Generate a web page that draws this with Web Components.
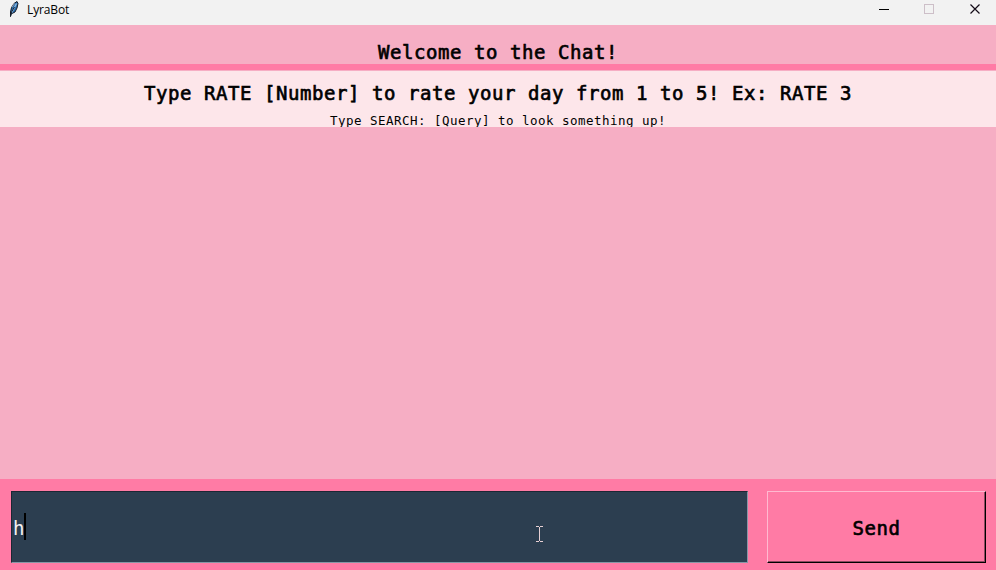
<!DOCTYPE html>
<html lang="en"><head><meta charset="utf-8"><title>LyraBot</title>
<style>html,body{margin:0;height:100%;overflow:hidden}</style></head><body>
<chat-window>
<title-bar slot="title">LyraBot</title-bar>
<chat-heading slot="head">Welcome to the Chat!</chat-heading>
<chat-log slot="log"><span slot="first">Type RATE [Number] to rate your day from 1 to 5! Ex: RATE 3</span><span slot="second">Type SEARCH: [Query] to look something up!</span></chat-log>
<chat-footer slot="foot"><chat-entry>h</chat-entry><chat-button>Send</chat-button></chat-footer>
</chat-window>
<script>
const define = (name, html) => customElements.define(name, class extends HTMLElement {
  constructor() { super(); this.attachShadow({mode: 'open'}).innerHTML = html; }
});
define('chat-window', `<style>:host{display:grid;grid-template-rows:25px 39px 415px 91px;width:996px;height:570px;background:#f6aec4;color:#000;font-family:"DejaVu Sans Mono",monospace}</style><slot name="title"></slot><slot name="head"></slot><slot name="log"></slot><slot name="foot"></slot>`);
define('title-bar', `<style>:host{display:flex;align-items:flex-start;background:#f2f2f2;font:12px/19px "Open Sans","Noto Sans",sans-serif;letter-spacing:-.12px}
.icon{margin:1px 7px 0 8px}.name{flex:1}.controls{display:block;flex:none}svg{shape-rendering:crispEdges}</style>
<svg class="icon" width="12" height="17" viewBox="0 0 12 17" style="shape-rendering:auto"><path d="M2.5 15.5V11L3.5 6.5 6 2.5 9 .5 10 2.5 9 7 7 11 3 13Z" fill="#2869a8" stroke="#171d29"/><path d="M3.5 12 8.5 2.5" stroke="#8bbbe4" stroke-width="1.3"/><path d="M2.5 15.5 3.5 11 6.5 6" stroke="#16202f" fill="none"/><path d="M4 6 6.5 2.5" stroke="#b9c2cf" stroke-width=".8"/></svg>
<span class="name"><slot></slot></span>
<svg class="controls" width="136" height="20" viewBox="0 0 136 20" fill="none"><path d="M19 9.5H29" stroke="#000"/><path d="M64.5 4.5H73.5V13.5H64.5Z" stroke="#cdbfc8"/><path d="M110.5 4.5 119.5 13.5M119.5 4.5 110.5 13.5" stroke="#140c18" stroke-width="1.2" style="shape-rendering:auto"/></svg>`);
define('chat-heading', `<style>:host{display:block;padding-top:15px;box-sizing:border-box;text-align:center;font-size:19px;line-height:25px;letter-spacing:.56px;-webkit-text-stroke:.65px #000;white-space:nowrap;overflow:hidden}</style><slot></slot>`);
define('chat-log', `<style>:host{display:block}.text{height:63px;box-sizing:border-box;border-top:6px solid #ff7ba5;background:#fde6ea;text-align:center;white-space:nowrap;overflow:hidden;box-shadow:inset 0 1px #f6aec4}
.large{padding-top:11px;font-size:19px;line-height:25px;letter-spacing:.56px;-webkit-text-stroke:.65px #000}.small{padding-top:6px;font-size:12.5px;line-height:18px;letter-spacing:.474px}</style><div class="text"><div class="large"><slot name="first"></slot></div><div class="small"><slot name="second"></slot></div></div>`);
define('chat-footer', `<style>:host{display:grid;grid-template-columns:737px 219px;column-gap:19px;box-sizing:border-box;padding:12px 10px 7px 11px;background:#ff7ba5}</style><slot></slot>`);
define('chat-entry', `<style>:host{display:flex;align-items:center;position:relative;box-sizing:border-box;background:#2c3e50;border:1px solid;border-color:#1c2633 #8796a6 #8796a6 #1c2633;color:#f4f0f2;font-size:19px;line-height:25px;padding:2px 0 0 1px}.caret{width:2px;height:27px;background:#000;margin-top:-3px}.pointer{position:absolute;left:524px;top:34px}</style><slot></slot><span class="caret"></span><svg class="pointer" width="7" height="17" viewBox="0 0 7 17" shape-rendering="crispEdges"><path d="M0 .5H3M4 .5H7M3.5 1V15M0 15.5H3M4 15.5H7" stroke="#e7d0d4" fill="none"/></svg>`);
define('chat-button', `<style>:host{display:grid;place-items:center;box-sizing:border-box;border:1px solid;border-color:#ffb9d0 #000 #000 #ffb9d0;box-shadow:inset -1px -1px #8d4960;font-size:19px;line-height:25px;letter-spacing:.56px;-webkit-text-stroke:.65px #000;padding-top:3px}</style><span><slot></slot></span>`);
</script></body></html>
